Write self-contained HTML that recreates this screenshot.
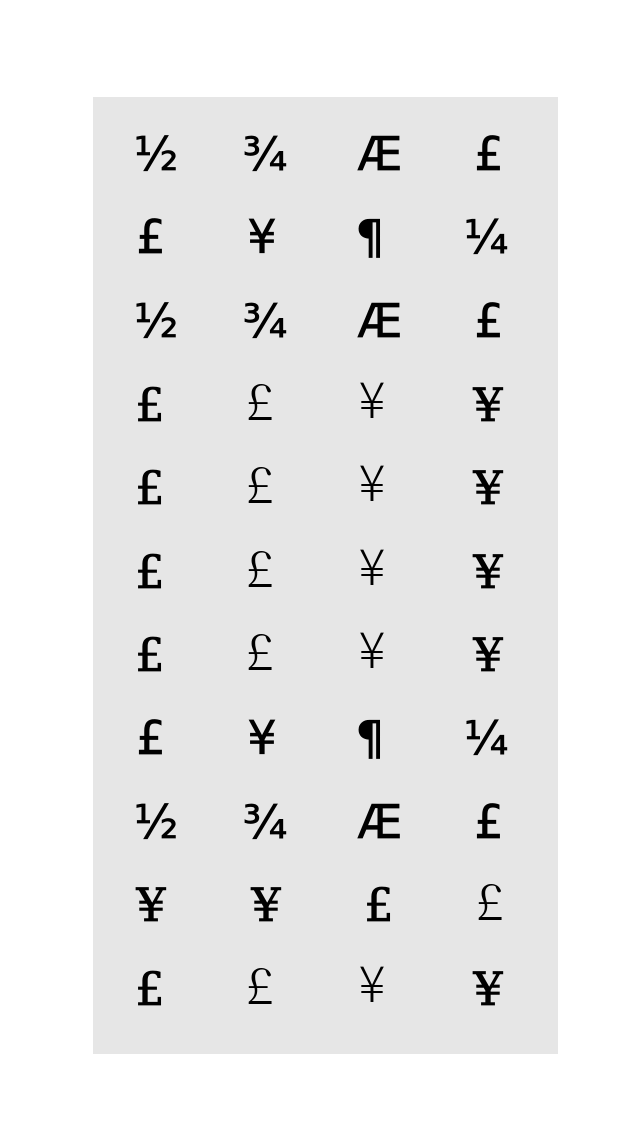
<!DOCTYPE html>
<html><head><meta charset="utf-8"><style>
body{margin:0;width:640px;height:1138px;background:#fff;position:relative;overflow:hidden}
.box{position:absolute;left:93px;top:97px;width:465px;height:957px;background:#e6e6e6}
.g{position:absolute;width:100px;margin-left:-50px;text-align:center;font-size:52px;line-height:52px;height:52px;color:#000}
.a{font-family:"DejaVu Sans",sans-serif;font-weight:normal;font-size:46px;-webkit-text-stroke:0.7px #000}
.b{font-family:"DejaVu Serif",serif;font-weight:normal;font-size:46px;-webkit-text-stroke:0.8px #000}
.c{font-family:"Noto Serif CJK SC",serif;font-weight:300;font-size:50px}
.d{font-family:"Noto Sans CJK JP",sans-serif;font-weight:300;font-size:50px}
</style></head><body>
<div class="box"></div>
<div class="g a" style="left:156px;top:128px">½</div>
<div class="g a" style="left:265px;top:128px">¾</div>
<div class="g a" style="left:380px;top:128px">Æ</div>
<div class="g a" style="left:489px;top:128px">£</div>

<div class="g a" style="left:151px;top:211px">£</div>
<div class="g a" style="left:262px;top:211px">¥</div>
<div class="g a" style="left:370px;top:211px">¶</div>
<div class="g a" style="left:486px;top:211px">¼</div>

<div class="g a" style="left:156px;top:295px">½</div>
<div class="g a" style="left:265px;top:295px">¾</div>
<div class="g a" style="left:380px;top:295px">Æ</div>
<div class="g a" style="left:489px;top:295px">£</div>

<div class="g b" style="left:150px;top:379px">£</div>
<div class="g c" style="left:260px;top:373px">£</div>
<div class="g d" style="left:372px;top:371px">¥</div>
<div class="g b" style="left:488px;top:379px">¥</div>

<div class="g b" style="left:150px;top:462px">£</div>
<div class="g c" style="left:260px;top:456px">£</div>
<div class="g d" style="left:372px;top:454px">¥</div>
<div class="g b" style="left:488px;top:462px">¥</div>

<div class="g b" style="left:150px;top:546px">£</div>
<div class="g c" style="left:260px;top:540px">£</div>
<div class="g d" style="left:372px;top:538px">¥</div>
<div class="g b" style="left:488px;top:546px">¥</div>

<div class="g b" style="left:150px;top:629px">£</div>
<div class="g c" style="left:260px;top:623px">£</div>
<div class="g d" style="left:372px;top:621px">¥</div>
<div class="g b" style="left:488px;top:629px">¥</div>

<div class="g a" style="left:151px;top:712px">£</div>
<div class="g a" style="left:262px;top:712px">¥</div>
<div class="g a" style="left:370px;top:712px">¶</div>
<div class="g a" style="left:486px;top:712px">¼</div>

<div class="g a" style="left:156px;top:796px">½</div>
<div class="g a" style="left:265px;top:796px">¾</div>
<div class="g a" style="left:380px;top:796px">Æ</div>
<div class="g a" style="left:489px;top:796px">£</div>

<div class="g b" style="left:151px;top:879px">¥</div>
<div class="g b" style="left:266px;top:879px">¥</div>
<div class="g b" style="left:379px;top:879px">£</div>
<div class="g c" style="left:490px;top:873px">£</div>

<div class="g b" style="left:150px;top:963px">£</div>
<div class="g c" style="left:260px;top:957px">£</div>
<div class="g d" style="left:372px;top:955px">¥</div>
<div class="g b" style="left:488px;top:963px">¥</div>
</body></html>
